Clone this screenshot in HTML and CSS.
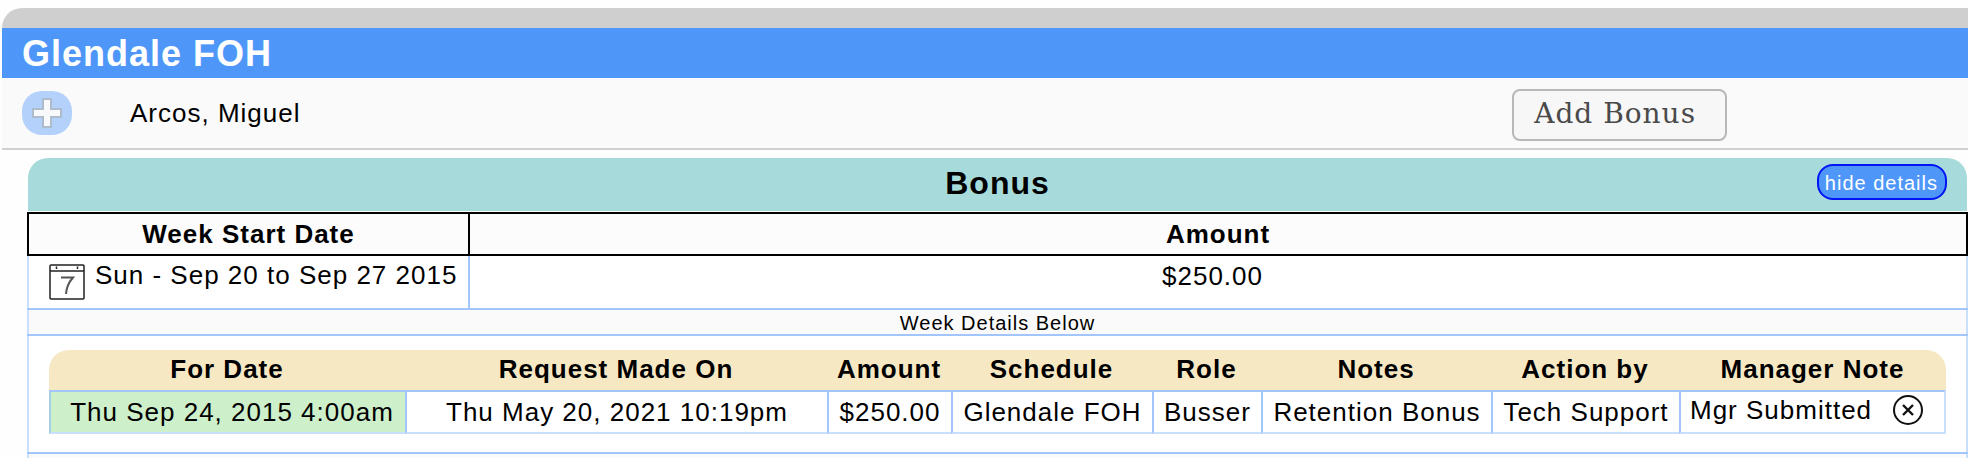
FILE: index.html
```html
<!DOCTYPE html>
<html lang="en">
<head>
    <meta charset="UTF-8">
    <meta name="viewport" content="width=device-width, initial-scale=1.0">
    <title>Glendale FOH - Bonus</title>
    <link rel="stylesheet" href="styles.css">
</head>
<body>

<div class="schedule">
    <div class="top-bar"></div>
    <h1>Glendale FOH</h1>

    <!-- Employee row -->
    <div class="employee">
        <button class="plus-btn" type="button" aria-label="Expand">
            <svg width="30" height="30" viewBox="0 0 30 30">
                <path d="M11 1H19V11H29V19H19V29H11V19H1V11H11Z" fill="#f8f9fa" stroke="#afbccb" stroke-width="2"/>
            </svg>
        </button>
        <span class="employee-name">Arcos, Miguel</span>
        <button class="add-bonus" type="button">Add Bonus</button>
    </div>

    <!-- Bonus section -->
    <div class="bonus">
        <div class="bonus-header">
            <h2>Bonus</h2>
            <button class="hide-details" type="button">hide details</button>
        </div>

        <table class="weeks">
            <colgroup>
                <col class="col-week">
                <col>
            </colgroup>
            <thead>
                <tr>
                    <th>Week Start Date</th>
                    <th>Amount</th>
                </tr>
            </thead>
            <tbody>
                <tr class="week-row">
                    <td>
                        <div class="week">
                            <svg class="calendar" width="36" height="36" viewBox="0 0 36 36" fill="none" stroke="#222">
                                <rect x="1" y="1" width="34" height="34" rx="1" stroke-width="1.5"/>
                                <path d="M1 7H35" stroke-width="1.5"/>
                                <path d="M7.5 2.5V5M28.5 2.5V5" stroke-width="1.5"/>
                                <path d="M12 13.5H24C20 18 17.5 23 17 30" stroke="#555" stroke-width="2"/>
                            </svg>
                            <span>Sun - Sep 20 to Sep 27 2015</span>
                        </div>
                    </td>
                    <td class="week-amount">$250.00</td>
                </tr>
                <tr class="strip">
                    <td colspan="2">Week Details Below</td>
                </tr>
                <tr>
                    <td class="details-cell" colspan="2">
                        <table class="details">
                            <colgroup>
                                <col class="col-date">
                                <col class="col-request">
                                <col class="col-amount">
                                <col class="col-schedule">
                                <col class="col-role">
                                <col class="col-notes">
                                <col class="col-action">
                                <col class="col-manager">
                            </colgroup>
                            <thead>
                                <tr>
                                    <th>For Date</th>
                                    <th>Request Made On</th>
                                    <th>Amount</th>
                                    <th>Schedule</th>
                                    <th>Role</th>
                                    <th>Notes</th>
                                    <th>Action by</th>
                                    <th>Manager Note</th>
                                </tr>
                            </thead>
                            <tbody>
                                <tr>
                                    <td class="for-date">Thu Sep 24, 2015 4:00am</td>
                                    <td>Thu May 20, 2021 10:19pm</td>
                                    <td>$250.00</td>
                                    <td>Glendale FOH</td>
                                    <td>Busser</td>
                                    <td>Retention Bonus</td>
                                    <td>Tech Support</td>
                                    <td>
                                        <div class="note">
                                            <span>Mgr Submitted</span>
                                            <button class="remove" type="button" aria-label="Remove">
                                                <svg width="30" height="30" viewBox="0 0 30 30" fill="none" stroke="#111" stroke-width="2">
                                                    <circle cx="15" cy="15" r="14"/>
                                                    <path d="M10 10L20 20M20 10L10 20" stroke-width="2.4"/>
                                                </svg>
                                            </button>
                                        </div>
                                    </td>
                                </tr>
                            </tbody>
                        </table>
                    </td>
                </tr>
                <tr class="week-end">
                    <td colspan="2"></td>
                </tr>
            </tbody>
        </table>
    </div>
</div>

</body>
</html>
```

FILE: styles.css
```css
* { box-sizing: border-box; }
body { margin: 0; padding: 8px 0 0 2px; background-color: #fefefe; color: #000; font-family: "Liberation Sans", Helvetica, Arial, sans-serif; font-size: 26px; line-height: 30px; letter-spacing: 1px; }
button { margin: 0; padding: 0; font-family: inherit; letter-spacing: inherit; cursor: pointer; }
svg { display: block; }

.top-bar { height: 20px; background-color: #cfcfcf; border-top-left-radius: 20px; }
h1 { margin: 0; padding: 5px 20px 3px; background-color: #4e97f9; color: #fff; font-size: 36px; line-height: 42px; }

.employee { display: flex; align-items: flex-start; padding: 11px 241px 7px 20px; background-color: #fafafa; border-bottom: 2px solid #d0d0d0; }
.plus-btn { display: flex; align-items: center; justify-content: center; width: 50px; height: 44px; margin-top: 2px; background-color: #b4d1fb; border: none; border-radius: 20px; }
.employee-name { margin-left: 58px; line-height: 48px; }
.add-bonus { margin-left: auto; padding: 7px 29px 9px 20px; background-color: #f7f7f7; color: #4a4a4a; border: 2px solid #b8b8b8; border-radius: 8px; font-family: "DejaVu Serif", serif; font-size: 28px; line-height: 32px; }

.bonus { padding: 8px 0 0 25px; }
.bonus-header { display: grid; grid-template-columns: 1fr auto 1fr; align-items: center; margin: 0 1px 1px; padding: 6px 20px 11px; background-color: #a7dbdb; border-radius: 20px 20px 0 0; }
h2 { grid-column: 2; margin: 0; padding-top: 2px; font-size: 32px; line-height: 34px; }
.hide-details { justify-self: end; padding: 5px 7px 3px 6px; background-color: #4e97f9; color: #fff; border: 2px solid #0014f5; border-radius: 16px; font-size: 20px; line-height: 24px; }

table { width: 100%; table-layout: fixed; text-align: center; white-space: nowrap; }
th, td { padding: 5px 0; }

.weeks { border-collapse: collapse; }
.weeks > thead th { background-color: #fcfcfc; border: 2px solid #000; }
.weeks > tbody > tr > td { border: 2px solid #a2c6fc; border-left-color: #c9dffd; border-right-color: #c9dffd; }
.weeks > tbody > .week-row > td { height: 54px; padding: 4px 0 0; background-color: #fff; vertical-align: top; }
.weeks > tbody > .week-row > td:first-child { border-right-color: #a2c6fc; }
.weeks > tbody > .week-row > .week-amount { padding: 5px 11px 0 0; }
.weeks > tbody > .strip > td { padding: 2px 0 0; background-color: #fafafa; font-size: 20px; line-height: 22px; }
.weeks > tbody > tr > .details-cell { padding: 14px 20px 18px; background-color: #fff; }
.weeks > tbody > .week-end > td { height: 5px; padding: 0; background-color: #fafafa; border-bottom: none; }
.col-week { width: 441px; }

.week { display: flex; gap: 10px; padding-left: 20px; }
.calendar { flex: none; margin-top: 4px; }

.details { border-collapse: separate; border-spacing: 0; }
.details th { padding: 4px 0 6px; background-color: #f7e8c4; }
.details th:first-child { border-top-left-radius: 20px; }
.details th:last-child { border-top-right-radius: 20px; }
.details td { height: 44px; border: 2px solid #a2c6fc; border-right: none; border-bottom-color: #c9dffd; }
.details td:last-child { padding: 0; border-right: 2px solid #c9dffd; }
.details .for-date { padding-left: 8px; background-color: #cdefca; border-left-color: #a6cfe3; }

.note { display: flex; align-items: center; gap: 21px; padding: 0 0 4px 9px; }
.remove { background: none; border: none; }

.col-date { width: 356px; }
.col-request { width: 422px; }
.col-amount { width: 124px; }
.col-schedule { width: 201px; }
.col-role { width: 109px; }
.col-notes { width: 230px; }
.col-action { width: 188px; }
.col-manager { width: 267px; }
```
